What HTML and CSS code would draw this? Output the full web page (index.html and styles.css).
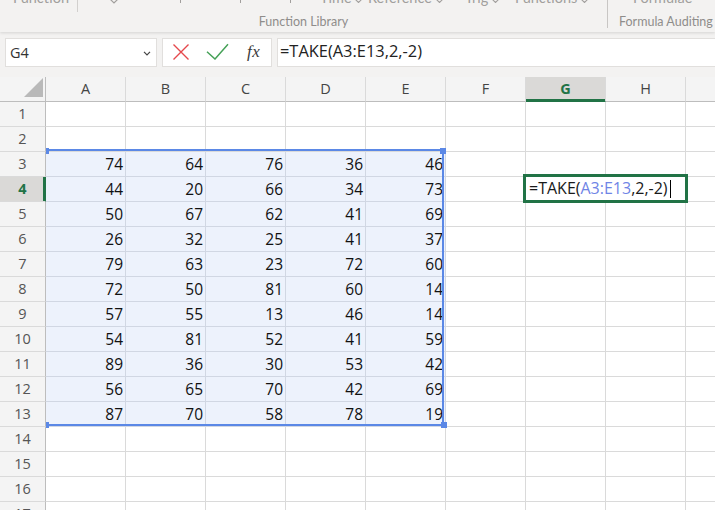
FILE: index.html
```html
<!DOCTYPE html>
<html>
<head>
<meta charset="utf-8">
<link rel="stylesheet" href="styles.css">
</head>
<body>
<div class="ribbon">
  <div class="group lib">
    <div class="tops">
      <span class="tl t-func">Function</span>
      <span class="mini-sep"></span>
      <svg class="chev big" width="8" height="5" viewBox="0 0 8 5"><polyline points="0.5,0.5 4,4 7.5,0.5" fill="none" stroke="#a19f9d" stroke-width="1.2"/></svg>
      <span class="tick k1"></span>
      <span class="tick k2"></span>
      <span class="tick k3"></span>
      <span class="tl t-time">Time <svg class="dd" width="7" height="4" viewBox="0 0 7 4"><polyline points="0.5,0.5 3.5,3.5 6.5,0.5" fill="none" stroke="#a19f9d" stroke-width="1.1"/></svg></span>
      <span class="tl t-ref">Reference <svg class="dd" width="7" height="4" viewBox="0 0 7 4"><polyline points="0.5,0.5 3.5,3.5 6.5,0.5" fill="none" stroke="#a19f9d" stroke-width="1.1"/></svg></span>
      <span class="tl t-trig">Trig <svg class="dd" width="7" height="4" viewBox="0 0 7 4"><polyline points="0.5,0.5 3.5,3.5 6.5,0.5" fill="none" stroke="#a19f9d" stroke-width="1.1"/></svg></span>
      <span class="tl t-fns">Functions <svg class="dd" width="7" height="4" viewBox="0 0 7 4"><polyline points="0.5,0.5 3.5,3.5 6.5,0.5" fill="none" stroke="#a19f9d" stroke-width="1.1"/></svg></span>
    </div>
    <div class="group-label">Function Library</div>
  </div>
  <div class="group-sep"></div>
  <div class="group audit">
    <div class="tops">
      <span class="tl t-formulae">Formulae</span>
    </div>
    <div class="group-label left">Formula Auditing</div>
  </div>
</div>

<div class="fbar">
  <div class="namebox">
    <span class="nb-text">G4</span>
    <svg class="nb-chev" width="8" height="5" viewBox="0 0 8 5"><polyline points="1,0.8 4,3.8 7,0.8" fill="none" stroke="#444" stroke-width="1.2"/></svg>
  </div>
  <div class="fbtns">
    <svg class="ic-x" width="16" height="16" viewBox="0 0 16 16"><path d="M0.5 0.5 L15.5 15.5 M15.5 0.5 L0.5 15.5" stroke="#e5484c" stroke-width="1.4" fill="none"/></svg>
    <svg class="ic-ok" width="23" height="17" viewBox="0 0 23 17"><polyline points="1,8.7 9,16 22,1.3" fill="none" stroke="#45a157" stroke-width="1.5"/></svg>
    <span class="fx">fx</span>
  </div>
  <div class="finput">=TAKE(A3:E13,2,-2)</div>
</div>

<div class="sheet">
  <div class="ch corner"><svg width="19" height="19" viewBox="0 0 19 19"><polygon points="19,0 19,19 0,19" fill="#b9b9b9"/></svg></div>
  <div class="ch">A</div><div class="ch">B</div><div class="ch">C</div><div class="ch">D</div><div class="ch">E</div><div class="ch">F</div><div class="ch act">G</div><div class="ch">H</div><div class="ch">I</div>

  <div class="rh">1</div><div class="c"></div><div class="c"></div><div class="c"></div><div class="c"></div><div class="c"></div><div class="c"></div><div class="c"></div><div class="c"></div><div class="c"></div>
  <div class="rh">2</div><div class="c"></div><div class="c"></div><div class="c"></div><div class="c"></div><div class="c"></div><div class="c"></div><div class="c"></div><div class="c"></div><div class="c"></div>
  <div class="rh">3</div><div class="c s">74</div><div class="c s">64</div><div class="c s">76</div><div class="c s">36</div><div class="c s">46</div><div class="c"></div><div class="c"></div><div class="c"></div><div class="c"></div>
  <div class="rh act">4</div><div class="c s">44</div><div class="c s">20</div><div class="c s">66</div><div class="c s">34</div><div class="c s">73</div><div class="c"></div><div class="c"></div><div class="c"></div><div class="c"></div>
  <div class="rh">5</div><div class="c s">50</div><div class="c s">67</div><div class="c s">62</div><div class="c s">41</div><div class="c s">69</div><div class="c"></div><div class="c"></div><div class="c"></div><div class="c"></div>
  <div class="rh">6</div><div class="c s">26</div><div class="c s">32</div><div class="c s">25</div><div class="c s">41</div><div class="c s">37</div><div class="c"></div><div class="c"></div><div class="c"></div><div class="c"></div>
  <div class="rh">7</div><div class="c s">79</div><div class="c s">63</div><div class="c s">23</div><div class="c s">72</div><div class="c s">60</div><div class="c"></div><div class="c"></div><div class="c"></div><div class="c"></div>
  <div class="rh">8</div><div class="c s">72</div><div class="c s">50</div><div class="c s">81</div><div class="c s">60</div><div class="c s">14</div><div class="c"></div><div class="c"></div><div class="c"></div><div class="c"></div>
  <div class="rh">9</div><div class="c s">57</div><div class="c s">55</div><div class="c s">13</div><div class="c s">46</div><div class="c s">14</div><div class="c"></div><div class="c"></div><div class="c"></div><div class="c"></div>
  <div class="rh">10</div><div class="c s">54</div><div class="c s">81</div><div class="c s">52</div><div class="c s">41</div><div class="c s">59</div><div class="c"></div><div class="c"></div><div class="c"></div><div class="c"></div>
  <div class="rh">11</div><div class="c s">89</div><div class="c s">36</div><div class="c s">30</div><div class="c s">53</div><div class="c s">42</div><div class="c"></div><div class="c"></div><div class="c"></div><div class="c"></div>
  <div class="rh">12</div><div class="c s">56</div><div class="c s">65</div><div class="c s">70</div><div class="c s">42</div><div class="c s">69</div><div class="c"></div><div class="c"></div><div class="c"></div><div class="c"></div>
  <div class="rh">13</div><div class="c s">87</div><div class="c s">70</div><div class="c s">58</div><div class="c s">78</div><div class="c s">19</div><div class="c"></div><div class="c"></div><div class="c"></div><div class="c"></div>
  <div class="rh">14</div><div class="c"></div><div class="c"></div><div class="c"></div><div class="c"></div><div class="c"></div><div class="c"></div><div class="c"></div><div class="c"></div><div class="c"></div>
  <div class="rh">15</div><div class="c"></div><div class="c"></div><div class="c"></div><div class="c"></div><div class="c"></div><div class="c"></div><div class="c"></div><div class="c"></div><div class="c"></div>
  <div class="rh">16</div><div class="c"></div><div class="c"></div><div class="c"></div><div class="c"></div><div class="c"></div><div class="c"></div><div class="c"></div><div class="c"></div><div class="c"></div>
  <div class="rh">17</div><div class="c"></div><div class="c"></div><div class="c"></div><div class="c"></div><div class="c"></div><div class="c"></div><div class="c"></div><div class="c"></div><div class="c"></div>

  <div class="selbox"></div>
  <div class="handle h-tl"></div>
  <div class="handle h-tr"></div>
  <div class="handle h-bl"></div>
  <div class="handle h-br"></div>

  <div class="editbox"><span class="eq">=TAKE(</span><span class="ref">A3:E13</span><span class="eq">,2,-2)</span><span class="caret"></span></div>
</div>
</body>
</html>
```

FILE: styles.css
```css
html, body {
  margin: 0;
  padding: 0;
}
body {
  width: 715px;
  height: 510px;
  overflow: hidden;
  background: #f3f2f1;
  font-family: "Open Sans", "Noto Sans", sans-serif;
}

/* ---------- ribbon ---------- */
.ribbon {
  height: 32px;
  display: flex;
  background: #f3f2f1;
  box-shadow: 0 1px 3px rgba(0, 0, 0, 0.13);
  position: relative;
  z-index: 3;
  overflow: hidden;
}
.group {
  display: flex;
  flex-direction: column;
}
.group.lib {
  width: 607px;
  flex: none;
}
.group.audit {
  flex: 1;
  padding-left: 11px;
}
.group-sep {
  width: 1px;
  height: 28px;
  background: #c8c6c4;
  flex: none;
}
.tops {
  display: flex;
  align-items: flex-start;
  margin-top: -10px;
  height: 16px;
  font-family: Lato, "Open Sans", sans-serif;
  font-size: 14.5px;
  line-height: 16px;
  color: #a19f9d;
  white-space: nowrap;
}
.tl {
  display: block;
  flex: none;
}
.t-func { margin-left: 13px; width: 64px; }
.mini-sep {
  width: 1px;
  height: 12px;
  margin-top: 10px;
  background: #d2d0ce;
  flex: none;
}
.chev.big { margin-left: 32px; margin-top: 9px; flex: none; }
.tick {
  width: 1px;
  height: 3px;
  margin-top: 10px;
  background: #a19f9d;
  flex: none;
}
.k1 { margin-left: 62px; }
.k2 { margin-left: 59px; }
.k3 { margin-left: 49px; }
.t-time { margin-left: 29px; width: 48px; }
.t-ref { width: 97px; }
.t-trig { width: 50px; }
.t-fns { width: 90px; }
.t-formulae { margin-left: 14px; }
.dd { vertical-align: baseline; }
.group-label {
  margin-top: auto;
  padding-bottom: 2px;
  text-align: center;
  font-family: Lato, "Open Sans", sans-serif;
  font-size: 12.5px;
  line-height: 16px;
  color: #8f8d8b;
  white-space: nowrap;
}
.group-label.left { text-align: left; }

/* ---------- formula bar ---------- */
.fbar {
  display: flex;
  gap: 5px;
  padding: 6px 0 10px 5px;
  height: 29px;
}
.namebox, .fbtns, .finput {
  box-sizing: border-box;
  height: 29px;
  background: #fff;
  border: 1px solid #e1dfdd;
}
.namebox {
  width: 152px;
  display: flex;
  align-items: flex-start;
  padding-left: 4px;
  font-size: 14.5px;
  line-height: 27px;
  color: #333;
}
.nb-text { flex: 1; }
.nb-chev { margin: 12px 5px 0 0; }
.fbtns {
  width: 110px;
  display: flex;
  align-items: flex-start;
  padding-left: 10px;
}
.ic-x { margin-top: 5px; }
.ic-ok { margin-top: 4px; margin-left: 17px; }
.fx {
  margin-left: 18px;
  font-family: "Liberation Serif", serif;
  font-style: italic;
  font-size: 17px;
  letter-spacing: 0.5px;
  line-height: 25px;
  color: #3b3b3b;
}
.finput {
  flex: 1;
  border-right: none;
  padding-left: 2px;
  font-size: 16.4px;
  line-height: 23px;
  color: #222;
  white-space: nowrap;
}

/* ---------- sheet ---------- */
.sheet {
  position: relative;
  display: grid;
  grid-template-columns: 46px repeat(9, 80px);
  grid-auto-rows: 25px;
}
.c, .ch, .rh {
  box-sizing: border-box;
  border-right: 1px solid #dadada;
  border-bottom: 1px solid #dadada;
  white-space: nowrap;
  overflow: hidden;
}
.c {
  background: #fff;
  text-align: right;
  padding-right: 2px;
  font-size: 15.5px;
  line-height: 24px;
  color: #111;
}
.c.s {
  background: #edf2fc;
  border-color: #d1d7e3;
}
.ch {
  background: #f4f4f4;
  border-bottom-color: #bdbdbd;
  text-align: center;
  font-size: 14.5px;
  line-height: 24px;
  color: #444;
}
.ch.corner {
  display: flex;
  justify-content: flex-end;
  align-items: flex-end;
  padding: 0 2px 4px 0;
  border-right-color: #bdbdbd;
}
.ch.act {
  background: #dad9d7;
  color: #217346;
  font-weight: 700;
  box-shadow: inset 0 -2px 0 #217346;
  border-bottom-color: #217346;
}
.rh {
  position: relative;
  z-index: 2;
  background: #f4f4f4;
  border-right-color: #bdbdbd;
  text-align: center;
  font-size: 14.5px;
  line-height: 24px;
  color: #555;
}
.rh.act {
  background: #dad9d7;
  color: #217346;
  font-weight: 700;
  border-right-color: #217346;
  box-shadow: inset -2px 0 0 #217346;
}

/* selection overlay */
.selbox {
  position: absolute;
  left: 46px;
  top: 72px;
  width: 398px;
  height: 277px;
  box-sizing: border-box;
  border-top: 2px solid #5b88e6;
  border-right: 2px solid #5b88e6;
  border-bottom: 2px solid #5b88e6;
  pointer-events: none;
}
.handle {
  position: absolute;
  width: 6px;
  height: 6px;
  background: #5b88e6;
}
.h-tl { left: 43px; top: 71px; }
.h-tr { left: 440px; top: 71px; }
.h-bl { left: 43px; top: 345px; }
.h-br { left: 441px; top: 345px; }

/* active cell in edit mode */
.editbox {
  position: absolute;
  left: 523px;
  top: 97px;
  width: 165px;
  height: 29px;
  box-sizing: border-box;
  border: 3px solid #217346;
  background: #fff;
  padding-left: 3px;
  font-size: 16px;
  line-height: 23px;
  color: #1a1a1a;
  white-space: nowrap;
  display: flex;
  align-items: flex-start;
  z-index: 3;
}
.ref { color: #6f84e6; }
.caret {
  width: 1px;
  height: 18px;
  margin-top: 3px;
  margin-left: 2px;
  background: #000;
}
```
